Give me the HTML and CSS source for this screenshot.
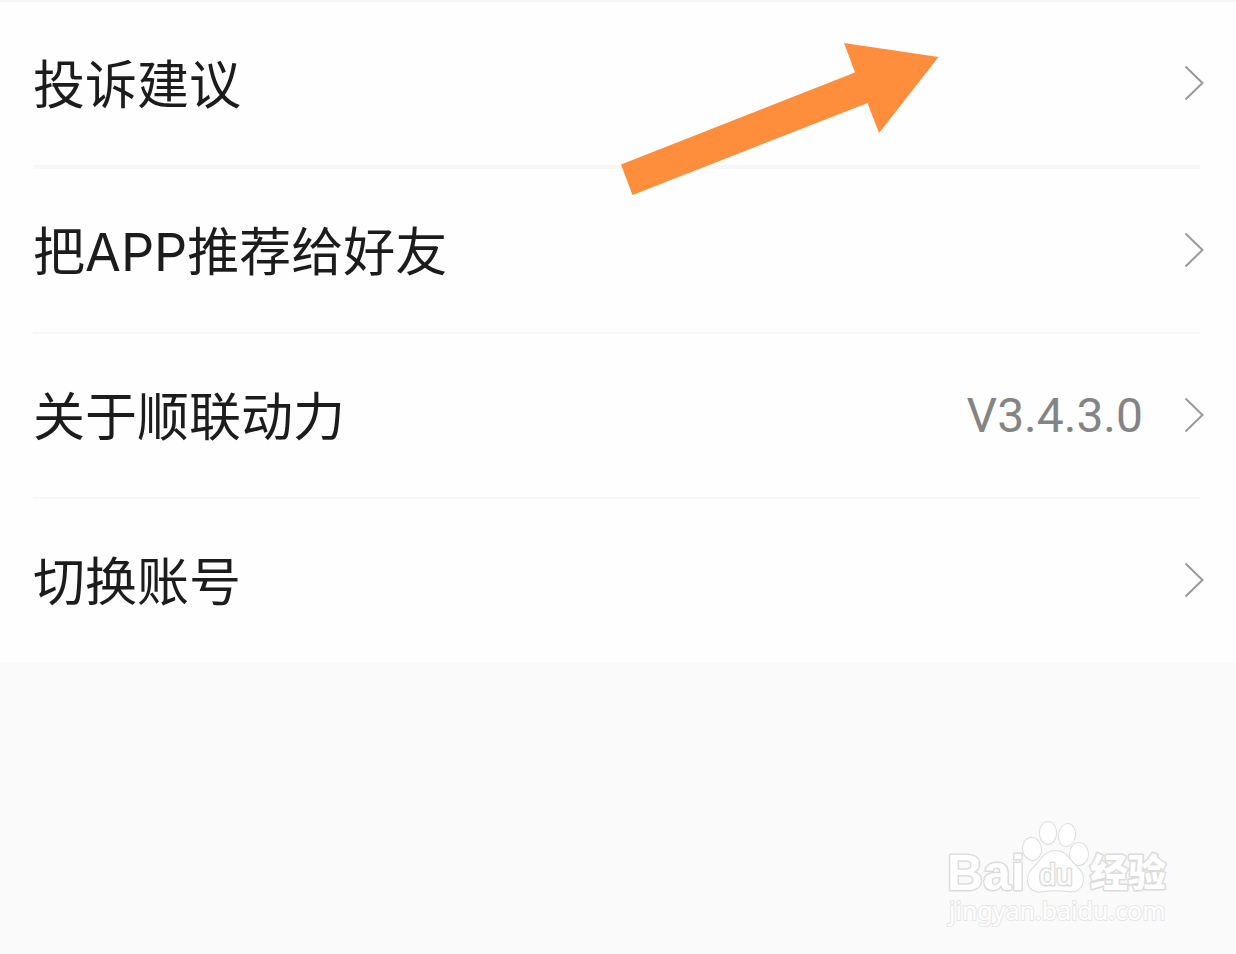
FILE: index.html
```html
<!DOCTYPE html>
<html lang="zh-CN">

<head>
    <meta charset="UTF-8">
    <meta name="viewport" content="width=device-width, initial-scale=1">
    <title>设置</title>
    <link rel="stylesheet" href="styles.css">
</head>

<body>
    <main>
        <ul class="menu">
            <li class="item wide">
                <a href="#feedback">
                    <span class="label">投诉建议</span>
                    <svg class="chevron" viewBox="0 0 20 36"><path d="M1.5.5 18.5 17 1.5 33.500"/></svg>
                </a>
            </li>
            <li class="item">
                <a href="#share">
                    <span class="label">把APP推荐给好友</span>
                    <svg class="chevron" viewBox="0 0 20 36"><path d="M1.5.5 18.5 17 1.5 33.500"/></svg>
                </a>
            </li>
            <li class="item">
                <a href="#about">
                    <span class="label">关于顺联动力</span>
                    <span class="version">V3.4.3.0</span>
                    <svg class="chevron" viewBox="0 0 20 36"><path d="M1.5.5 18.5 17 1.5 33.500"/></svg>
                </a>
            </li>
            <li class="item">
                <a href="#account">
                    <span class="label">切换账号</span>
                    <svg class="chevron" viewBox="0 0 20 36"><path d="M1.5.5 18.5 17 1.5 33.500"/></svg>
                </a>
            </li>
        </ul>
    </main>

    <svg class="arrow" viewBox="0 0 320 154" aria-hidden="true">
        <polygon points="3 122.500 237 30.500 226 1 320.500 15 261 91 249.500 61 14.500 153"/>
    </svg>

    <svg class="watermark" viewBox="0 0 240 120">
        <text class="brand" x="7" y="70">Bai</text>
        <ellipse cx="92" cy="29" rx="9" ry="11" transform="rotate(-8 92 29)"/>
        <ellipse cx="108" cy="13" rx="8" ry="11"/>
        <ellipse cx="127" cy="15" rx="8" ry="11" transform="rotate(10 127 15)"/>
        <ellipse cx="139" cy="34" rx="9" ry="11"/>
        <path d="M116 31C107 31 103 37 98 43C93 49 88 52 88 60C88 69 95 73 103 71C111 70 120 70 128 71C137 73 143 67 143 59C143 51 137 48 132 42C127 36 124 31 116 31Z"/>
        <text class="du" x="116" y="65">du</text>
        <text class="cn" x="150" y="66">经验</text>
        <text class="url" x="9" y="100">jingyan.baidu.com</text>
    </svg>
</body>

</html>
```
FILE: styles.css
```css
body {
    position: relative;
    box-sizing: border-box;
    min-height: 100vh;
    margin: 0;
    background-color: #fafafa;
    color: #1c1c1c;
    font-family: Roboto, "Noto Sans CJK SC", sans-serif;
}

.menu {
    margin: 0;
    padding: 0;
    list-style: none;
    background-color: #fefefe;
    border-top: 2px solid #f5f5f5;
}

.item {
    margin: 0 36px 0 33px;
    border-bottom: 2px solid #f8f8f8;
}

.item.wide {
    border-bottom: 4px solid #f7f7f7;
}

.item:last-child {
    border-bottom: 0;
}

.item a {
    display: flex;
    align-items: center;
    margin-right: -4px;
    padding: 42px 0;
    color: inherit;
    line-height: 79px;
    text-decoration: none;
}

.label {
    flex: 1;
    padding-top: 5px;
    font-family: Inter, "Noto Sans CJK SC", sans-serif;
    font-size: 52px;
    line-height: 74px;
}

.version {
    margin-right: 41px;
    color: #848484;
    font-size: 48px;
}

.chevron {
    width: 20px;
    height: 36px;
    fill: none;
    stroke: #999;
    stroke-width: 2;
}

/* overlays */
.arrow {
    position: absolute;
    top: 42px;
    left: 50%;
    width: 320px;
    height: 154px;
    fill: #ff8e3c;
    overflow: visible;
}

.watermark {
    position: absolute;
    right: 56px;
    bottom: 14px;
    width: 240px;
    height: 120px;
    fill: #fff;
    stroke: #dcdcdc;
    stroke-width: 2;
    stroke-linejoin: round;
    paint-order: stroke;
    overflow: visible;
}

.brand {
    font: bold 50px "Liberation Sans", sans-serif;
    stroke-width: 3;
}

.du {
    font: 30px "Liberation Sans", sans-serif;
    stroke-width: 3;
    text-anchor: middle;
}

.cn {
    font: 900 38px "Noto Sans CJK SC", sans-serif;
    stroke-width: 3;
}

.url {
    font: 25px "Noto Sans", sans-serif;
    stroke: #e6e6e6;
}
```
